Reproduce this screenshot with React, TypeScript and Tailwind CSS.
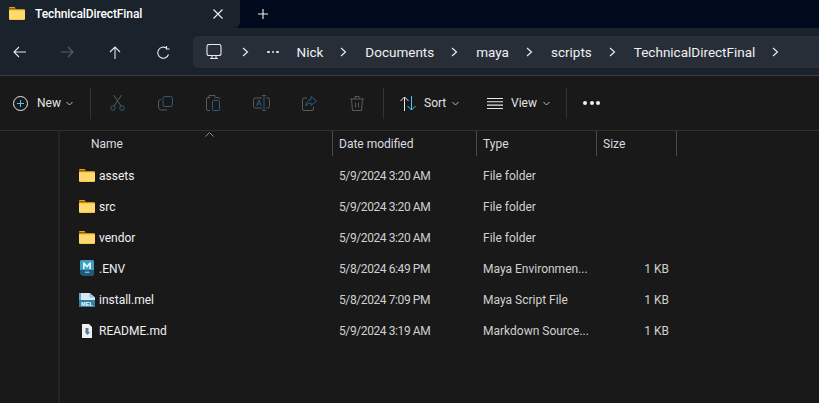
import { ReactNode } from 'react'

const FolderIcon = ({ size = 16 }: { size?: number }) => (
  <svg width={size} height={size} viewBox="0 0 16 16" className="shrink-0">
    <path d="M0 2.2C0 1.5.5 1 1.2 1h4.2l1.6 1.6H0z" fill="#e8a50e" />
    <path d="M0 3.2h14.900c.6 0 1.100.5 1.100 1.100v8.500c0 .7-.5 1.200-1.200 1.200H1.200C.5 14 0 13.500 0 12.800z" fill="#f5b91c" />
    <path d="M0 4.400h14.900c.6 0 1.100.4 1.100 1v7.200c0 .6-.5 1-1.100 1H1.100c-.6 0-1.100-.4-1.100-1z" fill="#fdd96f" />
  </svg>
)

const MayaEnvIcon = () => (
  <svg width="16" height="17" viewBox="0 0 16 17" className="shrink-0">
    <path d="M2 0h12l1 1v13l-1 1.500H3.500L1 13.500V1z" fill="#3d9dc4" />
    <path d="M1 10h14v4l-1 1.500H3.500L1 13.500z" fill="#1d5a78" />
    <path d="M4 9V2.500h1.600L8 5.500l2.400-3H12V9h-1.600V5.200L8 8 5.600 5.200V9z" fill="#e6f4fa" />
    <rect x="6" y="11.500" width="4.500" height="1.500" fill="#8ab4c8" />
  </svg>
)

const MelIcon = () => (
  <svg width="16" height="16" viewBox="0 0 16 16" className="shrink-0">
    <path d="M0 1h10.500L16 5.500V15H0z" fill="#2f7fa6" />
    <path d="M0 1h10.500L16 5.500V8H0z" fill="#d7e9f2" />
    <path d="M0 1h2v7H0z" fill="#5ea9cc" />
    <path d="M10.500 1L16 5.500h-5.500z" fill="#8fc3dc" />
    <text x="8" y="13.800" textAnchor="middle" fontSize="5.600" fontWeight="700" fontFamily="Liberation Sans" fill="#fff">MEL</text>
  </svg>
)

const MarkdownIcon = () => (
  <svg width="16" height="16" viewBox="0 0 16 16" className="shrink-0">
    <path d="M3 1h7l3 3v11H3z" fill="#f0f0f0" />
    <path d="M6.500 5h3v4H11l-2.500 3L6 9h.5z" fill="#4d7f9c" />
  </svg>
)

const Chevron = () => (
  <svg width="7" height="10" viewBox="0 0 7 10" className="shrink-0">
    <path d="M1 1l4.500 4L1 9" fill="none" stroke="#e8e8e8" strokeWidth="1.200" />
  </svg>
)

const SmallCaret = () => (
  <svg width="7" height="5" viewBox="0 0 7 5" className="shrink-0">
    <path d="M.5 1L3.500 4l3-3" fill="none" stroke="#b9b9b9" strokeWidth="1" />
  </svg>
)

const Icon = ({ w = 16, h = 16, children, stroke = '#e8e8e8' }: { w?: number; h?: number; children: ReactNode; stroke?: string }) => (
  <svg width={w} height={h} viewBox={`0 0 ${w} ${h}`} fill="none" stroke={stroke} strokeWidth="1.100" className="shrink-0">
    {children}
  </svg>
)

const BLUE = '#2b5d7d'
const GRAY = '#585b5e'

const rows = [
  { name: 'assets', date: '5/9/2024 3:20 AM', type: 'File folder', size: '', icon: <FolderIcon /> },
  { name: 'src', date: '5/9/2024 3:20 AM', type: 'File folder', size: '', icon: <FolderIcon /> },
  { name: 'vendor', date: '5/9/2024 3:20 AM', type: 'File folder', size: '', icon: <FolderIcon /> },
  { name: '.ENV', date: '5/8/2024 6:49 PM', type: 'Maya Environmen...', size: '1 KB', icon: <MayaEnvIcon /> },
  { name: 'install.mel', date: '5/8/2024 7:09 PM', type: 'Maya Script File', size: '1 KB', icon: <MelIcon /> },
  { name: 'README.md', date: '5/9/2024 3:19 AM', type: 'Markdown Source...', size: '1 KB', icon: <MarkdownIcon /> },
]

const crumbs = ['Nick', 'Documents', 'maya', 'scripts', 'TechnicalDirectFinal']

export default function App() {
  return (
    <div className="h-[403px] w-[819px] overflow-hidden bg-[#191919] text-[12px] text-[#e4e4e4] font-['Roboto',sans-serif]">
      {/* title strip */}
      <div className="flex h-[28px] bg-[#000a1c]">
        <div className="flex w-[240px] items-center rounded-br-[6px] bg-[#1a222c] pl-[9px] pr-[17px]">
          <FolderIcon />
          <span className="ml-[10px] grow font-medium tracking-[-0.1px] text-white">TechnicalDirectFinal</span>
          <Icon w={10} h={10} stroke="#f0f0f0">
            <path d="M.5.500l9 9M9.500.500l-9 9" />
          </Icon>
        </div>
        <div className="ml-[18px] flex items-center">
          <Icon w={10} h={10} stroke="#f0f0f0">
            <path d="M5 0v10M0 5h10" />
          </Icon>
        </div>
      </div>

      {/* nav and breadcrumb */}
      <div className="flex h-[48px] items-center border-b border-[#3b3d40] bg-[#1a222c] pl-[13px] pt-[1px]">
        <Icon w={13} h={12}>
          <path d="M13 6H1M6 1L1 6l5 5" />
        </Icon>
        <div className="ml-[35px]">
          <Icon w={13} h={12} stroke="#5a5f66">
            <path d="M0 6h12M7 1l5 5-5 5" />
          </Icon>
        </div>
        <div className="ml-[35px]">
          <Icon w={12} h={13}>
            <path d="M6 13V1M1 6l5-5 5 5" />
          </Icon>
        </div>
        <div className="ml-[36px]">
          <Icon w={13} h={13}>
            <path d="M11.500 8.500A5.500 5.500 0 1 1 9.500 2.200" />
            <path d="M9.500 0v3h3" />
          </Icon>
        </div>
        <div className="ml-[23px] flex h-[32px] grow items-center rounded-l-[5px] bg-[#272e38] pl-[13px]">
          <Icon w={16} h={16}>
            <rect x="1" y=".5" width="14" height="11" rx="2" />
            <path d="M4 14.500h8M6 12v2.500M10 12v2.500" />
          </Icon>
          <div className="ml-[20px]"><Chevron /></div>
          <span className="ml-[18px] flex gap-[2px]">
            <span className="size-[2.500px] rounded-full bg-[#e8e8e8]" />
            <span className="size-[2.500px] rounded-full bg-[#e8e8e8]" />
            <span className="size-[2.500px] rounded-full bg-[#e8e8e8]" />
          </span>
          {crumbs.map((crumb) => (
            <div key={crumb} className="ml-[18px] flex items-center">
              <span className="text-[13.500px] text-[#f0f0f0]">{crumb}</span>
              <div className="ml-[17px]"><Chevron /></div>
            </div>
          ))}
        </div>
      </div>

      {/* command bar */}
      <div className="flex h-[55px] items-center border-b border-[#2f2f2f] pl-[13px]">
        <svg width="15" height="15" viewBox="0 0 15 15" fill="none" className="shrink-0">
          <circle cx="7.500" cy="7.500" r="7" stroke="#e8e8e8" />
          <path d="M7.500 4v7M4 7.500h7" stroke="#4cc2ff" />
        </svg>
        <span className="ml-[9px] w-[23px]">New</span>
        <div className="ml-[6px]"><SmallCaret /></div>
        <div className="ml-[17px] h-[31px] w-px bg-[#333]" />
        <svg width="15" height="16" viewBox="0 0 15 16" fill="none" className="ml-[19px] shrink-0">
          <circle cx="3" cy="13" r="2.300" stroke={BLUE} />
          <circle cx="12" cy="13" r="2.300" stroke={BLUE} />
          <path d="M4 11L11.500 0M11 11L3.500 0" stroke={GRAY} />
        </svg>
        <svg width="15" height="15" viewBox="0 0 15 15" fill="none" className="ml-[33px] shrink-0">
          <rect x="5" y=".5" width="9.500" height="10" rx="2" stroke={BLUE} />
          <path d="M3 3.500a2.500 2.500 0 0 0-2.500 2.500v5a3 3 0 0 0 3 3H9" stroke={GRAY} />
        </svg>
        <svg width="14" height="16" viewBox="0 0 14 16" fill="none" className="ml-[33px] shrink-0">
          <path d="M4 2.500H2A1.500 1.500 0 0 0 .5 4v10A1.500 1.500 0 0 0 2 15.500h2M3 3.500V.5h6v3M10 2.500h2A1.500 1.500 0 0 1 13.500 4" stroke={GRAY} />
          <rect x="6.500" y="5.500" width="7" height="10" rx="1" stroke={BLUE} />
        </svg>
        <svg width="17" height="16" viewBox="0 0 17 16" fill="none" className="ml-[33px] shrink-0">
          <path d="M9 3H2a1.500 1.500 0 0 0-1.500 1.500v7A1.500 1.500 0 0 0 2 13h7M13 3h2a1.500 1.500 0 0 1 1.500 1.500v7A1.500 1.500 0 0 1 15 13h-2" stroke={GRAY} />
          <path d="M11 .5v15M9 .5h4M9 15.500h4M3.500 11l2.500-6 2.500 6M4.500 9h3" stroke={BLUE} />
        </svg>
        <svg width="15" height="15" viewBox="0 0 15 15" fill="none" className="ml-[32px] shrink-0">
          <path d="M5 2H2a1.500 1.500 0 0 0-1.500 1.500V13A1.500 1.500 0 0 0 2 14.500h8a1.500 1.500 0 0 0 1.500-1.500v-2" stroke={GRAY} />
          <path d="M9 .5L14.500 5 9 9.500V7C6.500 7 5 8 4 10c0-4 2-6 5-6.500z" stroke={BLUE} />
        </svg>
        <svg width="14" height="15" viewBox="0 0 14 15" fill="none" className="ml-[33px] shrink-0">
          <path d="M0 3h14M5 3V.5h4V3M1.500 3l1 11.500h9l1-11.500M5.500 6.500v5M8.500 6.500v5" stroke={GRAY} />
        </svg>
        <div className="ml-[19px] h-[31px] w-px bg-[#333]" />
        <svg width="17" height="15" viewBox="0 0 17 15" fill="none" className="ml-[16px] shrink-0">
          <path d="M4.500 15V1M.5 5l4-4 4 4" stroke="#e8e8e8" />
          <path d="M11.500 0v14M7.500 10l4 4 4-4" stroke="#4cc2ff" />
        </svg>
        <span className="ml-[7px] w-[22px]">Sort</span>
        <div className="ml-[6px]"><SmallCaret /></div>
        <div className="ml-[28px]">
          <Icon w={16} h={11}>
            <path d="M0 .5h16M0 3.800h16M0 7.100h16M0 10.500h16" />
          </Icon>
        </div>
        <span className="ml-[8px] w-[25px]">View</span>
        <div className="ml-[7px]"><SmallCaret /></div>
        <div className="ml-[16px] h-[31px] w-px bg-[#333]" />
        <div className="ml-[16px] flex gap-[2.500px]">
          <span className="size-[4px] rounded-full bg-[#f0f0f0]" />
          <span className="size-[4px] rounded-full bg-[#f0f0f0]" />
          <span className="size-[4px] rounded-full bg-[#f0f0f0]" />
        </div>
      </div>

      {/* body */}
      <div className="flex h-[271px]">
        <div className="w-[60px] shrink-0 border-r-2 border-[#252525]" />
        <div className="relative grow">
          <svg width="9" height="5" viewBox="0 0 9 5" fill="none" className="absolute left-[145px] top-[1px]">
            <path d="M.5 4.500l4-4 4 4" stroke="#8a8a8a" />
          </svg>
          <div className="flex h-[25px] items-center text-[#d8dde0]">
            <div className="h-full w-[273px] border-r border-[#4a4a4a] pl-[31px] leading-[26px]">Name</div>
            <div className="h-full w-[144px] border-r border-[#4a4a4a] pl-[6px] leading-[26px]">Date modified</div>
            <div className="h-full w-[120px] border-r border-[#4a4a4a] pl-[6px] leading-[26px]">Type</div>
            <div className="h-full w-[80px] border-r border-[#4a4a4a] pl-[6px] leading-[26px]">Size</div>
          </div>
          <div className="pt-[4px]">
            {rows.map((row) => (
              <div key={row.name} className="flex h-[31px] items-center">
                <div className="flex w-[273px] items-center pl-[19px]">
                  {row.icon}
                  <span className="ml-[4px] text-[#f0f0f0]">{row.name}</span>
                </div>
                <div className="w-[144px] pl-[6px] tracking-[-0.4px] text-[#d0d0d0]">{row.date}</div>
                <div className="w-[120px] pl-[6px] text-[#d0d0d0]">{row.type}</div>
                <div className="w-[72px] text-right text-[#d0d0d0]">{row.size}</div>
              </div>
            ))}
          </div>
        </div>
      </div>
    </div>
  )
}
